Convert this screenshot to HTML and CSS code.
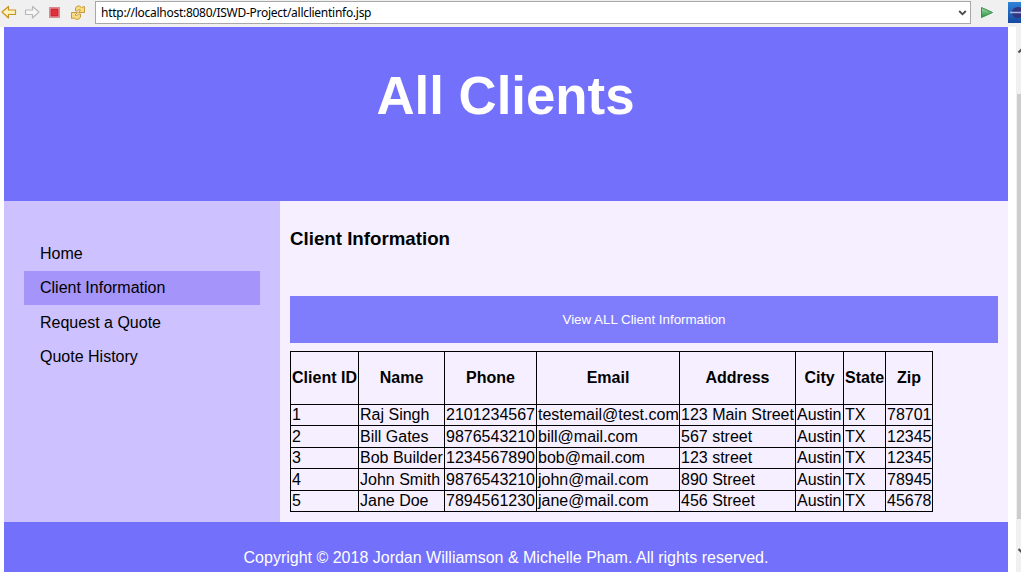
FILE: index.html
```html
<!DOCTYPE html>
<html lang="en">
<head>
<meta charset="utf-8">
<title>All Clients</title>
<link rel="stylesheet" href="styles.css">
</head>
<body>
<div class="toolbar">
  <svg class="icons" width="95" height="26" viewBox="0 0 95 26">
    <path d="M2 12 8.500 6.500V10H15.500V14.500H8.500V18Z" fill="#fff1bd" stroke="#c99322" stroke-width="1.200" stroke-linejoin="round"/>
    <path d="M39 12 32.500 6.500V10H25.500V14.500H32.500V18Z" fill="#f6f6f6" stroke="#b9b9b9" stroke-width="1.200" stroke-linejoin="round"/>
    <rect x="49.500" y="7.500" width="10" height="10" fill="#f4b8bc" stroke="#d98a90"/>
    <rect x="51" y="9" width="7" height="7" fill="#e0303c" stroke="#c3202c"/>
    <g fill="#f8dc83" stroke="#c99a3a" stroke-linejoin="round">
      <path d="M75.500 11V8Q76.500 5.500 79.500 6L81.500 7.500 84.500 6.500V12.500H78.500L80.500 10Q78.500 8.500 77.500 11Z"/>
      <path d="M80.500 14V17Q79.500 19.500 76.500 19.500L74 18 71.500 18.500V12.500H77.500L75 15Q77 17 78.500 14Z"/>
    </g>
  </svg>
  <div class="address"><span class="url">http://localhost:8080/ISWD-Project/allclientinfo.jsp</span>
    <svg width="9" height="8" viewBox="0 0 9 8"><path d="M1.200 2 4.500 5.300 7.800 2" fill="none" stroke="#484848" stroke-width="1.800"/></svg>
  </div>
  <svg class="go" width="50" height="26" viewBox="0 0 50 26">
    <defs>
      <linearGradient id="play" x2="0" y2="1"><stop stop-color="#a5dba8"/><stop offset="1" stop-color="#299341"/></linearGradient>
      <linearGradient id="globe" x2="0" y2="1"><stop stop-color="#2f83d7"/><stop offset="1" stop-color="#1648a0"/></linearGradient>
    </defs>
    <path d="M10.500 7.500 21.500 12.500 10.500 17.500Z" fill="url(#play)" stroke="#388f49"/>
    <rect x="37" y="2" width="13" height="21" fill="url(#globe)"/>
    <ellipse cx="47" cy="12.500" rx="6" ry="5.500" fill="#34347f"/>
    <path d="M39 12.500H50" stroke="#a6b8e8" stroke-width="1.500"/>
  </svg>
</div>
<div class="viewport">
  <div class="page">
    <header class="banner"><h1>All Clients</h1></header>
    <div class="body">
      <nav class="menu">
        <a>Home</a>
        <a class="active">Client Information</a>
        <a>Request a Quote</a>
        <a>Quote History</a>
      </nav>
      <main class="content">
        <h3>Client Information</h3>
        <button class="view-all">View ALL Client Information</button>
        <table class="clients">
          <colgroup><col class="c-id"><col class="c-name"><col class="c-phone"><col class="c-email"><col class="c-address"><col class="c-city"><col class="c-state"><col class="c-zip"></colgroup>
          <tr class="head"><th>Client ID</th><th>Name</th><th>Phone</th><th>Email</th><th>Address</th><th>City</th><th>State</th><th>Zip</th></tr>
          <tr><td>1</td><td>Raj Singh</td><td>2101234567</td><td>testemail@test.com</td><td>123 Main Street</td><td>Austin</td><td>TX</td><td>78701</td></tr>
          <tr class="tall"><td>2</td><td>Bill Gates</td><td>9876543210</td><td>bill@mail.com</td><td>567 street</td><td>Austin</td><td>TX</td><td>12345</td></tr>
          <tr><td>3</td><td>Bob Builder</td><td>1234567890</td><td>bob@mail.com</td><td>123 street</td><td>Austin</td><td>TX</td><td>12345</td></tr>
          <tr class="tall"><td>4</td><td>John Smith</td><td>9876543210</td><td>john@mail.com</td><td>890 Street</td><td>Austin</td><td>TX</td><td>78945</td></tr>
          <tr><td>5</td><td>Jane Doe</td><td>7894561230</td><td>jane@mail.com</td><td>456 Street</td><td>Austin</td><td>TX</td><td>45678</td></tr>
        </table>
      </main>
    </div>
    <footer class="footer">Copyright © 2018 Jordan Williamson &amp; Michelle Pham. All rights reserved.</footer>
  </div>
  <div class="scrollbar">
    <svg class="arrow" width="5" height="67" viewBox="0 0 5 67"><path d="M2.500 25.500 6 22" fill="none" stroke="#505050" stroke-width="2"/></svg>
    <div class="thumb"></div>
    <svg class="arrow" width="5" height="53" viewBox="0 0 5 53"><path d="M2.500 30 6 33.500" fill="none" stroke="#505050" stroke-width="2"/></svg>
  </div>
</div>
</body>
</html>
```
FILE: styles.css
```css
* { box-sizing: border-box; }
body {
  margin: 0;
  width: 1021px;
  height: 572px;
  overflow: hidden;
  background: #fff;
  font: 16px/18px "Liberation Sans", Arial, sans-serif;
  color: #000;
}
.toolbar { display: flex; height: 27px; background: #f0f0f0; }
.icons, .go { flex: none; display: block; }
.address {
  display: flex;
  align-items: center;
  justify-content: space-between;
  width: 876px;
  height: 23px;
  margin-top: 1px;
  padding: 0 3px 0 5px;
  border: 1px solid #a8a8a8;
  background: #fff;
}
.url { font: 12px/20px "Noto Sans", sans-serif; letter-spacing: -0.27px; white-space: nowrap; }
.viewport { display: flex; height: 545px; padding-left: 4px; }
.page { width: 1004px; margin-right: 8px; }
.banner { height: 174px; padding: 39px 1px 0 0; background: #7370fc; color: #fff; text-align: center; }
.banner h1 { margin: 0; font-size: 52.800px; line-height: 60px; }
.body { display: flex; height: 321px; }
.menu { width: 276px; padding: 35.500px 20px 0; background: #cdc1ff; }
.menu a { display: block; height: 34.400px; padding: 8px 16px; }
.menu .active { background: #a594f9; }
.menu .active ~ a { padding-top: 8.400px; }
.content { flex: 1; padding: 27px 10px 0; background: #f5efff; }
.content h3 { margin: 0 0 47px; font-size: 18.720px; line-height: 21px; }
.view-all {
  display: block;
  width: 100%;
  height: 47px;
  margin-bottom: 8px;
  border: 0;
  background: #807dfd;
  color: #fff;
  font: 13.330px "Liberation Sans", Arial, sans-serif;
}
.clients { table-layout: fixed; width: 643px; border-collapse: collapse; }
.clients th, .clients td { padding: 0 1px; border: 1px solid #000; white-space: nowrap; }
.clients td { text-align: left; }
.clients tr { height: 21px; }
.clients tr.tall { height: 22px; }
.clients tr.head { height: 53px; }
.c-id { width: 68px; }
.c-name { width: 86px; }
.c-phone { width: 92px; }
.c-email { width: 143px; }
.c-address { width: 116px; }
.c-city { width: 48px; }
.c-state { width: 42px; }
.c-zip { width: 47px; }
.footer { height: 50px; padding-top: 27px; background: #7370fc; color: #fff; text-align: center; }
.scrollbar { width: 5px; background: #f0f0f0; }
.arrow { display: block; }
.thumb { height: 425px; margin-left: 1px; background: #cdcdcd; }
```
